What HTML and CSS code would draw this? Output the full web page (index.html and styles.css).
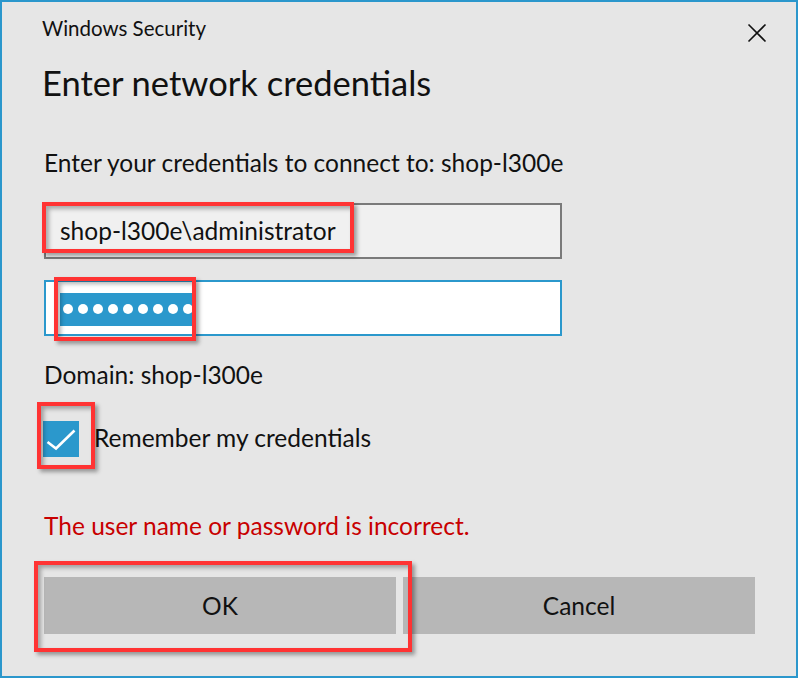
FILE: index.html
```html
<!DOCTYPE html>
<html>
<head>
<meta charset="utf-8">
<link rel="stylesheet" href="styles.css">
</head>
<body>
<div class="dialog">
  <div class="header">
    <div class="app-title">Windows Security</div>
    <svg class="close" width="20" height="20" viewBox="0 0 20 20"><path d="M1.5 1.5 L18.5 18.5 M18.5 1.5 L1.5 18.5" stroke="#111" stroke-width="1.6" fill="none"/></svg>
  </div>
  <div class="heading">Enter network credentials</div>
  <div class="prompt">Enter your credentials to connect to: shop-l300e</div>
  <div class="field field-user">shop-l300e\administrator</div>
  <div class="field field-pass">
    <span class="selection"><i class="dot"></i><i class="dot"></i><i class="dot"></i><i class="dot"></i><i class="dot"></i><i class="dot"></i><i class="dot"></i><i class="dot"></i><i class="dot"></i></span>
  </div>
  <div class="domain">Domain: shop-l300e</div>
  <div class="check-row">
    <span class="checkbox"><svg width="36" height="36" viewBox="0 0 36 36"><polyline points="4.5,21 13,27.5 31.5,9.5" fill="none" stroke="#fff" stroke-width="2.6"/></svg></span>
    <span class="check-label">Remember my credentials</span>
  </div>
  <div class="error">The user name or password is incorrect.</div>
  <div class="buttons">
    <div class="btn">OK</div>
    <div class="btn">Cancel</div>
  </div>

  <div class="mark mark-user"></div>
  <div class="mark mark-pass"></div>
  <div class="mark mark-check"></div>
  <div class="mark mark-ok"></div>
</div>
</body>
</html>
```
FILE: styles.css
```css
html, body {
  margin: 0;
  padding: 0;
}
body {
  width: 798px;
  height: 678px;
  overflow: hidden;
  font-family: Lato, "Open Sans", "Liberation Sans", sans-serif;
  color: #111;
}
.dialog {
  position: relative;
  box-sizing: border-box;
  width: 798px;
  height: 678px;
  background: #e6e6e6;
  border: 2px solid #2b97cc;
  padding: 0 0 0 42px;
  display: flex;
  flex-direction: column;
  align-items: flex-start;
}
.header {
  align-self: stretch;
  display: flex;
  justify-content: space-between;
  align-items: center;
  margin-top: 14px;
  padding-right: 29px;
  height: 24px;
}
.app-title {
  font-size: 20.5px;
  line-height: 24px;
  margin-left: -2px;
}
.close {
  display: block;
  margin-top: 10px;
}
.heading {
  font-size: 34.5px;
  line-height: 44px;
  margin-top: 21px;
  margin-left: -2px;
}
.prompt, .domain, .error, .check-label, .field, .btn {
  font-size: 24.5px;
  line-height: 30px;
}
.prompt {
  margin-top: 43px;
}
.field {
  box-sizing: border-box;
  width: 518px;
  height: 56px;
  border: 2px solid #7a7a7a;
  background: #f0f0f0;
  display: flex;
  align-items: center;
  padding-left: 14px;
}
.field-user {
  margin-top: 25px;
}
.field-pass {
  margin-top: 21px;
  background: #fff;
  border-color: #2b98cc;
}
.selection {
  display: flex;
  align-items: center;
  gap: 5px;
  height: 33px;
  padding: 0 1px 0 3px;
  background: #2b98cc;
  margin-top: 2px;
}
.dot {
  display: block;
  width: 10px;
  height: 10px;
  border-radius: 50%;
  background: #fff;
}
.domain {
  margin-top: 24px;
}
.check-row {
  display: flex;
  align-items: center;
  margin-top: 31px;
  height: 36px;
}
.checkbox {
  display: block;
  width: 36px;
  height: 36px;
  background: #2b98cc;
  margin-left: -1px;
}
.checkbox svg {
  display: block;
}
.check-label {
  margin-left: 15px;
  padding-bottom: 2px;
}
.error {
  color: #c80000;
  margin-top: 54px;
}
.buttons {
  display: flex;
  gap: 7px;
  margin-top: 36px;
}
.btn {
  width: 352px;
  height: 57px;
  background: #b7b7b7;
  display: flex;
  align-items: center;
  justify-content: center;
}
.mark {
  position: absolute;
  box-sizing: border-box;
  border: 4px solid #ff3333;
  box-shadow: 3px 3px 4px rgba(0, 0, 0, 0.35), inset 3px 3px 4px rgba(0, 0, 0, 0.3);
}
.mark-user {
  left: 40px;
  top: 200px;
  width: 312px;
  height: 51px;
}
.mark-pass {
  left: 52px;
  top: 275px;
  width: 142px;
  height: 64px;
}
.mark-check {
  left: 35px;
  top: 400px;
  width: 58px;
  height: 67px;
}
.mark-ok {
  left: 32px;
  top: 559px;
  width: 378px;
  height: 91px;
}
```
